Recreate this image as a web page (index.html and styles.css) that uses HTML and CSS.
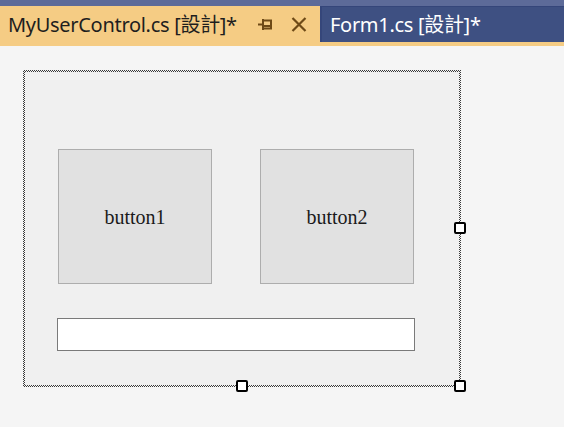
FILE: index.html
```html
<!DOCTYPE html>
<html>
<head>
<meta charset="utf-8">
<link rel="stylesheet" href="styles.css">
</head>
<body>
<div class="titlestrip"></div>
<div class="tabs">
  <div class="tab tab-active">
    <span class="tab-label">MyUserControl.cs [設計]*</span>
    <svg class="pin" width="14" height="13" viewBox="0 0 14 13">
      <path d="M0 6.5H5" stroke="#6e4a17" stroke-width="2" fill="none"/>
      <path d="M5 1V12" stroke="#6e4a17" stroke-width="2" fill="none"/>
      <path d="M6 2.5H13V10.5H6" stroke="#6e4a17" stroke-width="2" fill="none"/>
      <path d="M6 8H13" stroke="#6e4a17" stroke-width="2" fill="none"/>
    </svg>
    <svg class="close" width="16" height="15" viewBox="0 0 16 15">
      <path d="M1.5 1L14.5 14M14.5 1L1.5 14" stroke="#6e4a17" stroke-width="2.2" fill="none"/>
    </svg>
  </div>
  <div class="tab tab-inactive">
    <span class="tab-label">Form1.cs [設計]*</span>
  </div>
</div>
<div class="tabline"></div>
<div class="canvas">
  <div class="uc">
    <div class="uc-inner">
      <div class="btn-row">
        <div class="winbtn">button1</div>
        <div class="winbtn">button2</div>
      </div>
      <div class="textbox"></div>
    </div>
    <div class="handle h-right"></div>
    <div class="handle h-bottom"></div>
    <div class="handle h-corner"></div>
  </div>
</div>
</body>
</html>
```

FILE: styles.css
```css
html, body {
  margin: 0;
  padding: 0;
  background: #f5f5f5;
  width: 564px;
  height: 427px;
  overflow: hidden;
}

.titlestrip {
  height: 6px;
  background: #5d6b99;
}

.tabs {
  display: flex;
  height: 36px;
  background: #3e5082;
}

.tab {
  display: flex;
  align-items: center;
  height: 100%;
  box-sizing: border-box;
  font-family: "Noto Sans", "Noto Sans CJK TC", sans-serif;
  font-size: 20px;
  letter-spacing: -0.3px;
  white-space: nowrap;
}

.tab-active {
  width: 320px;
  background: #f5cc84;
  color: #1e1e1e;
  padding-left: 8px;
}

.tab-inactive {
  flex: 1;
  color: #ffffff;
  padding-left: 8px;
  border-left: 2px solid #35467a;
  border-top: 1px solid #35467a;
}

.tab-label {
  line-height: 36px;
  padding-top: 1px;
}

.pin {
  margin-left: auto;
}

.close {
  margin-left: 19px;
  margin-right: 13px;
}

.tabline {
  height: 4px;
  background: #f5cc84;
}

.canvas {
  padding: 24px 0 0 23px;
}

.uc {
  position: relative;
  width: 438px;
  height: 317px;
  box-sizing: border-box;
  padding: 2px;
  background: repeating-conic-gradient(#3a3a3a 0 25%, #f5f5f5 0 50%) 0 0 / 2px 2px;
}

.uc-inner {
  width: 100%;
  height: 100%;
  background: #f0f0f0;
  box-sizing: border-box;
  padding: 77px 0 0 32px;
  display: flex;
  flex-direction: column;
}

.btn-row {
  display: flex;
  gap: 48px;
  margin-left: 1px;
}

.winbtn {
  width: 154px;
  height: 135px;
  box-sizing: border-box;
  background: #e1e1e1;
  border: 1px solid #adadad;
  display: flex;
  align-items: center;
  justify-content: center;
  font-family: "Liberation Serif", serif;
  font-size: 20px;
  color: #1a1a1a;
  padding-top: 2px;
}

.textbox {
  margin-top: 34px;
  width: 358px;
  height: 33px;
  box-sizing: border-box;
  background: #ffffff;
  border: 1px solid #7a7a7a;
}

.handle {
  position: absolute;
  width: 12px;
  height: 12px;
  box-sizing: border-box;
  background: #ffffff;
  border: 2px solid #000000;
  border-radius: 2px;
}

.h-right { left: 431px; top: 152px; }
.h-bottom { left: 213px; top: 310px; }
.h-corner { left: 431px; top: 310px; }
```
